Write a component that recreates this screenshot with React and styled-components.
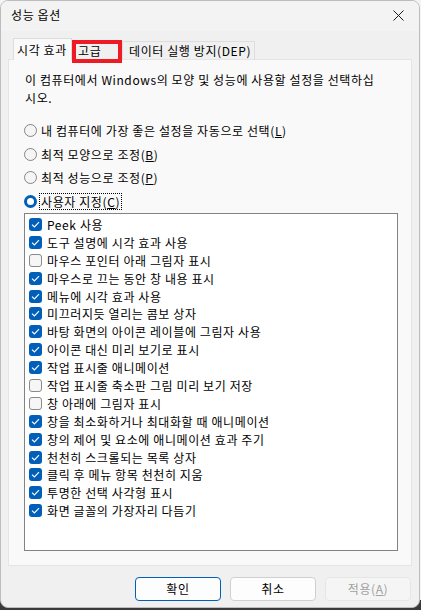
import React from 'react';
import styled, { createGlobalStyle } from 'styled-components';

const Global = createGlobalStyle`
html, body {
  margin: 0;
  padding: 0;
}
body {
  width: 421px;
  height: 610px;
  background: linear-gradient(to bottom, #f4f4f4 0, #f4f4f4 600px, #3a3a3a 600px);
  font-family: "Noto Sans CJK KR", "Noto Sans", sans-serif;
  font-size: 12px;
  letter-spacing: 0.6px;
  color: #000;
}
`;

const Window = styled.div`
width: 420px;
height: 608px;
box-sizing: border-box;
border: 1px solid #bdbdbd;
border-radius: 8px;
background: #f0f0f0;
display: flex;
flex-direction: column;
overflow: hidden;
`;

const TitleBar = styled.div`
height: 30px;
flex: none;
display: flex;
align-items: center;
justify-content: space-between;
padding-left: 10px;
background: #f3f3f3;
`;

const Title = styled.span`
font-size: 12px;
line-height: 16px;
margin-top: -2px;
`;

const CloseButton = styled.div`
width: 46px;
height: 30px;
display: flex;
align-items: center;
justify-content: center;
margin-right: -2px;
margin-top: -2px;
`;

const Body = styled.div`
flex: 1;
display: flex;
flex-direction: column;
padding: 7px 7px 6px 7px;
`;

const TabRow = styled.div`
display: flex;
align-items: flex-end;
margin-left: 5px;
margin-bottom: -1px;
position: relative;
z-index: 1;
`;

const Tab = styled.div`
position: relative;
box-sizing: border-box;
width: ${p => p.w}px;
height: ${p => (p.active ? '22px' : '19px')};
padding-left: ${p => (p.active ? '3px' : '6px')};
display: flex;
align-items: center;
background: ${p => (p.active ? '#f9f9f9' : '#f0f0f0')};
border: 1px solid #dddddd;
border-bottom: ${p => (p.active ? 'none' : '1px solid #e5e5e5')};
border-left: ${p => (p.first || p.active ? '1px solid #dddddd' : 'none')};
line-height: 16px;
white-space: nowrap;

${p => p.marked && `
  &::after {
    content: '';
    position: absolute;
    left: 0;
    top: -2px;
    right: 0;
    bottom: -4px;
    border: 4px solid #ed1c24;
  }
`}
`;

const Panel = styled.div`
flex: 1;
display: flex;
flex-direction: column;
background: #f9f9f9;
border: 1px solid #e5e5e5;
padding: 11px 13px 0 15px;
`;

const Description = styled.p`
margin: 0 0 0 1px;
line-height: 18px;
`;

const RadioGroup = styled.div`
margin-top: 12px;
display: flex;
flex-direction: column;
`;

const RadioRow = styled.div`
height: 23.5px;
display: flex;
align-items: center;
gap: 3px;
`;

const Radio = styled.span`
width: 13px;
height: 13px;
box-sizing: border-box;
border-radius: 50%;
flex: none;
border: ${p => (p.checked ? '3.5px solid #005fb8' : '1px solid #858585')};
background: ${p => (p.checked ? '#ffffff' : '#f5f5f5')};
`;

const RadioLabel = styled.span`
line-height: 15px;
padding: 0 1px;
outline: ${p => (p.focused ? '1px dotted #000' : 'none')};
`;

const ListBox = styled.div`
width: 374px;
box-sizing: border-box;
flex: 1;
margin-bottom: 14px;
background: #fff;
border: 1px solid #838383;
padding: 1.5px 0 0 4px;
`;

const CheckRow = styled.div`
height: 17.9px;
display: flex;
align-items: center;
gap: 5px;
white-space: nowrap;
`;

const Box = styled.span`
width: 13px;
height: 13px;
box-sizing: border-box;
border-radius: 3px;
flex: none;
display: flex;
align-items: center;
justify-content: center;
background: ${p => (p.checked ? '#005fb8' : '#f6f6f6')};
border: ${p => (p.checked ? 'none' : '1px solid #8a8a8a')};
`;

const ButtonRow = styled.div`
display: flex;
justify-content: flex-end;
gap: 9px;
margin-top: 11px;
padding-right: 1px;
`;

const Button = styled.div`
width: 86px;
height: 24px;
box-sizing: border-box;
display: flex;
align-items: center;
justify-content: center;
border-radius: 4px;
background: ${p => (p.disabled ? '#f5f5f5' : '#fdfdfd')};
border: 1px solid ${p => (p.primary ? '#005fb8' : p.disabled ? '#e5e5e5' : '#d0d0d0')};
color: ${p => (p.disabled ? '#a0a0a0' : '#000')};
line-height: 16px;
`;

const radios = [
  ['내 컴퓨터에 가장 좋은 설정을 자동으로 선택', 'L'],
  ['최적 모양으로 조정', 'B'],
  ['최적 성능으로 조정', 'P'],
  ['사용자 지정', 'C'],
];

const options = [
  ['Peek 사용', true],
  ['도구 설명에 시각 효과 사용', true],
  ['마우스 포인터 아래 그림자 표시', false],
  ['마우스로 끄는 동안 창 내용 표시', true],
  ['메뉴에 시각 효과 사용', true],
  ['미끄러지듯 열리는 콤보 상자', true],
  ['바탕 화면의 아이콘 레이블에 그림자 사용', true],
  ['아이콘 대신 미리 보기로 표시', true],
  ['작업 표시줄 애니메이션', true],
  ['작업 표시줄 축소판 그림 미리 보기 저장', false],
  ['창 아래에 그림자 표시', false],
  ['창을 최소화하거나 최대화할 때 애니메이션', true],
  ['창의 제어 및 요소에 애니메이션 효과 주기', true],
  ['천천히 스크롤되는 목록 상자', true],
  ['클릭 후 메뉴 항목 천천히 지움', true],
  ['투명한 선택 사각형 표시', true],
  ['화면 글꼴의 가장자리 다듬기', true],
];

function Check() {
  return (
    <svg width="9" height="7" viewBox="0 0 9 7">
      <path d="M1 3.6 L3.4 6 L8 1.2" fill="none" stroke="#fff" strokeWidth="1.2" />
    </svg>
  );
}

export default function App() {
  return (
    <>
      <Global />
      <Window>
        <TitleBar>
          <Title>성능 옵션</Title>
          <CloseButton>
            <svg width="11" height="11" viewBox="0 0 11 11">
              <path d="M0.5 0.5 L10.5 10.5 M10.5 0.5 L0.5 10.5" stroke="#1a1a1a" strokeWidth="1" />
            </svg>
          </CloseButton>
        </TitleBar>
        <Body>
          <TabRow>
            <Tab active first w={59}>시각 효과</Tab>
            <Tab marked w={51}>고급</Tab>
            <Tab w={132}>데이터 실행 방지(DEP)</Tab>
          </TabRow>
          <Panel>
            <Description>
              이 컴퓨터에서 Windows의 모양 및 성능에 사용할 설정을 선택하십
              <br />
              시오.
            </Description>
            <RadioGroup>
              {radios.map(([label, key], i) => (
                <RadioRow key={key}>
                  <Radio checked={i === 3} />
                  <RadioLabel focused={i === 3}>
                    {label}(<u>{key}</u>)
                  </RadioLabel>
                </RadioRow>
              ))}
            </RadioGroup>
            <ListBox>
              {options.map(([label, on]) => (
                <CheckRow key={label}>
                  <Box checked={on}>{on && <Check />}</Box>
                  <span>{label}</span>
                </CheckRow>
              ))}
            </ListBox>
          </Panel>
          <ButtonRow>
            <Button primary>확인</Button>
            <Button>취소</Button>
            <Button disabled>
              <span>
                적용(<u>A</u>)
              </span>
            </Button>
          </ButtonRow>
        </Body>
      </Window>
    </>
  );
}
